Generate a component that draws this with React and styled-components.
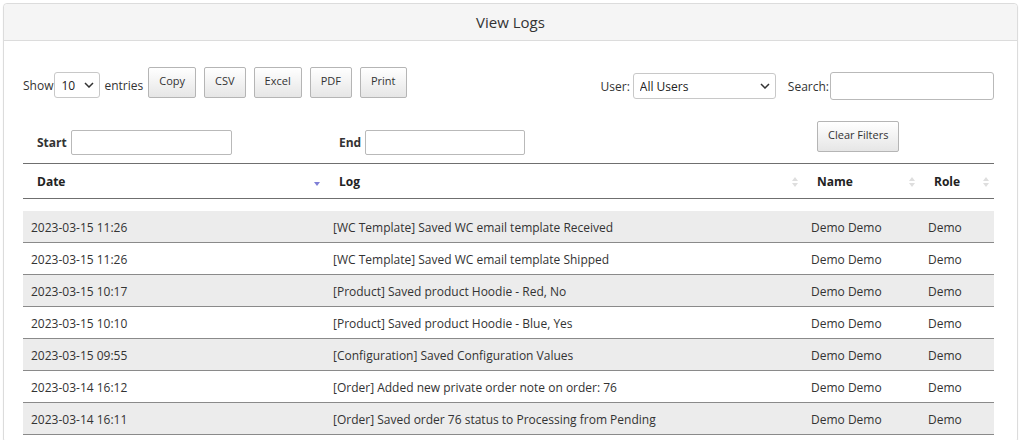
import React from "react";
import styled, { createGlobalStyle } from "styled-components";

const Global = createGlobalStyle`
  html, body { margin: 0; padding: 0; background: #fff; }
  body { font-family: "Open Sans", "Noto Sans", sans-serif; color: #333; font-size: 12px; }
  * { box-sizing: border-box; }
`;

const Page = styled.div`
  padding: 3px 6px 0 3px;
`;

const Panel = styled.section`
  border: 1px solid #dcdcdc;
  border-radius: 4px;
  box-shadow: 0 1px 2px rgba(0,0,0,0.05);
  background: #fff;
  min-height: 440px;
`;

const PanelHeader = styled.header`
  height: 37px;
  background: #f5f5f5;
  border-bottom: 1px solid #dcdcdc;
  display: flex;
  align-items: center;
  justify-content: center;
  font-size: 15px;
  color: #333;
  border-radius: 4px 4px 0 0;
`;

const PanelBody = styled.div`
  padding: 25px 23px 0 19px;
`;

const Toolbar = styled.div`
  display: flex;
  justify-content: space-between;
  align-items: flex-start;
  height: 55px;
`;

const Group = styled.div`
  display: flex;
  align-items: center;
  gap: ${p => p.$gap || 0}px;
  margin-top: ${p => p.$top || 0}px;
`;

const Label = styled.label`
  font-size: 12px;
  color: #333;
  display: flex;
  align-items: center;
  gap: ${p => p.$gap ?? 2}px;
  font-weight: ${p => (p.$bold ? 700 : 400)};
`;

const Suffix = styled.span`
  margin-left: 3px;
`;

const SelectWrap = styled.div`
  position: relative;
  width: ${p => p.$w}px;
  height: 26px;
`;

const Select = styled.select`
  appearance: none;
  width: 100%;
  height: 100%;
  border: 1px solid #c8c8c8;
  border-radius: 3px;
  background: #fff;
  font: inherit;
  font-size: 12px;
  color: #222;
  padding: 0 0 0 6px;
`;

const Chevron = styled.svg`
  position: absolute;
  right: 6px;
  top: 10px;
  pointer-events: none;
`;

const TextInput = styled.input`
  width: ${p => p.$w}px;
  height: ${p => p.$h || 25}px;
  border: 1px solid #b9b9b9;
  border-radius: ${p => p.$r || 2}px;
  background: #fff;
  font: inherit;
`;

const Buttons = styled.div`
  display: flex;
  gap: 8px;
  margin-left: 5px;
`;

const Btn = styled.button`
  height: 31px;
  padding: 0 10px 4px;
  border: 1px solid #b5b5b5;
  border-radius: 2px;
  background: linear-gradient(#ffffff, #e6e6e6);
  font-family: inherit;
  font-size: 11px;
  color: #333;
  display: flex;
  align-items: center;
`;

const Grid = `
  display: grid;
  grid-template-columns: 302px 478px 117px 74px;
`;

const FilterRow = styled.div`
  ${Grid}
  height: 42px;
`;

const FilterCell = styled.div`
  padding-left: 14px;
  display: flex;
  align-items: flex-start;
  padding-top: ${p => (p.$top ? 0 : 9)}px;
`;

const Table = styled.div`
  width: 971px;
`;

const HeadRow = styled.div`
  ${Grid}
  height: 36px;
  border-top: 1px solid #6f6f6f;
  border-bottom: 1px solid #6f6f6f;
  margin-bottom: 12px;
`;

const Th = styled.div`
  position: relative;
  padding-left: 14px;
  display: flex;
  align-items: center;
  font-weight: 700;
  font-size: 12px;
  color: #222;
`;

const SortIcon = styled.svg`
  position: absolute;
  right: 4px;
  top: 12px;
`;

const Row = styled.div`
  ${Grid}
  height: 32px;
  background: ${p => (p.$odd ? "#ececec" : "#fff")};
  border-bottom: 1px solid #8a8a8a;
`;

const Td = styled.div`
  padding-left: 8px;
  padding-top: 1px;
  display: flex;
  align-items: center;
  font-size: 12px;
  color: #333;
  white-space: nowrap;
`;

const ChevronIcon = () => (
  <Chevron width="10" height="6" viewBox="0 0 10 6">
    <path d="M1 1 L5 5 L9 1" fill="none" stroke="#333" strokeWidth="1.5" />
  </Chevron>
);

const Sort = ({ active }) =>
  active ? (
    <SortIcon width="8" height="12" viewBox="0 0 8 12">
      <path d="M1 6 L7 6 L4 10 Z" fill="#7f7fd6" />
    </SortIcon>
  ) : (
    <SortIcon width="8" height="12" viewBox="0 0 8 12">
      <path d="M1 5 L7 5 L4 1 Z" fill="#dedede" />
      <path d="M1 7 L7 7 L4 11 Z" fill="#dedede" />
    </SortIcon>
  );

const rows = [
  ["2023-03-15 11:26", "[WC Template] Saved WC email template Received"],
  ["2023-03-15 11:26", "[WC Template] Saved WC email template Shipped"],
  ["2023-03-15 10:17", "[Product] Saved product Hoodie - Red, No"],
  ["2023-03-15 10:10", "[Product] Saved product Hoodie - Blue, Yes"],
  ["2023-03-15 09:55", "[Configuration] Saved Configuration Values"],
  ["2023-03-14 16:12", "[Order] Added new private order note on order: 76"],
  ["2023-03-14 16:11", "[Order] Saved order 76 status to Processing from Pending"],
];

export default function App() {
  return (
    <Page>
      <Global />
      <Panel>
        <PanelHeader>View Logs</PanelHeader>
        <PanelBody>
          <Toolbar>
            <Group>
              <Group $top={6}>
                <Label $gap={1}>
                  Show
                  <SelectWrap $w={46}>
                    <Select defaultValue="10">
                      <option>10</option>
                      <option>25</option>
                    </Select>
                    <ChevronIcon />
                  </SelectWrap>
                  <Suffix>entries</Suffix>
                </Label>
              </Group>
              <Buttons>
                <Btn>Copy</Btn>
                <Btn>CSV</Btn>
                <Btn>Excel</Btn>
                <Btn>PDF</Btn>
                <Btn>Print</Btn>
              </Buttons>
            </Group>
            <Group $top={6} $gap={12}>
              <Label $gap={3}>
                User:
                <SelectWrap $w={143}>
                  <Select defaultValue="all">
                    <option value="all">All Users</option>
                  </Select>
                  <ChevronIcon />
                </SelectWrap>
              </Label>
              <Label $gap={1}>
                Search:
                <TextInput $w={164} $h={28} $r={3} />
              </Label>
            </Group>
          </Toolbar>
          <FilterRow>
            <FilterCell>
              <Label $bold $gap={4}>Start <TextInput $w={161} /></Label>
            </FilterCell>
            <FilterCell>
              <Label $bold $gap={4}>End <TextInput $w={160} /></Label>
            </FilterCell>
            <FilterCell $top>
              <Btn>Clear Filters</Btn>
            </FilterCell>
            <div />
          </FilterRow>
          <Table>
            <HeadRow>
              <Th>Date<Sort active /></Th>
              <Th>Log<Sort /></Th>
              <Th>Name<Sort /></Th>
              <Th>Role<Sort /></Th>
            </HeadRow>
            {rows.map((r, i) => (
              <Row key={i} $odd={i % 2 === 0}>
                <Td>{r[0]}</Td>
                <Td>{r[1]}</Td>
                <Td>Demo Demo</Td>
                <Td>Demo</Td>
              </Row>
            ))}
          </Table>
        </PanelBody>
      </Panel>
    </Page>
  );
}
